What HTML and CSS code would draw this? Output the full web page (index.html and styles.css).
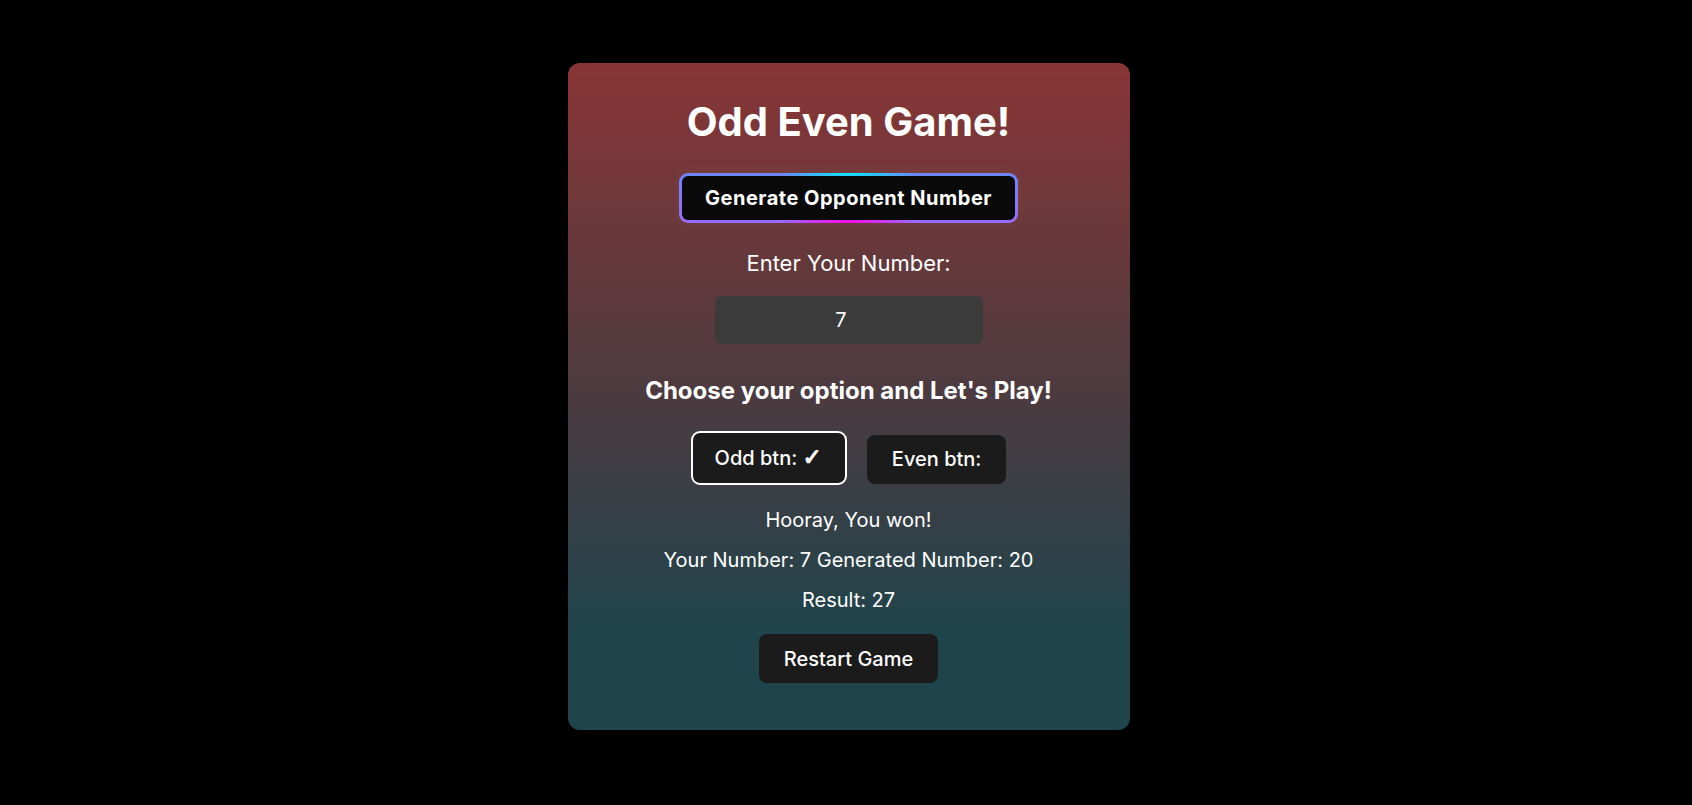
FILE: index.html
```html
<!DOCTYPE html>
<html lang="en">
<head>
<meta charset="utf-8">
<title>Odd Even Game</title>
<link rel="stylesheet" href="styles.css">
</head>
<body>
<main class="page">
  <section class="card">
    <h1 class="title">Odd Even Game!</h1>
    <button class="gen-btn" type="button">Generate Opponent Number</button>
    <label class="label" for="num">Enter Your Number:</label>
    <input id="num" class="num-input" type="number" value="7">
    <h2 class="subtitle">Choose your option and Let's Play!</h2>
    <div class="options">
      <button class="opt-btn opt-btn--active" type="button">Odd btn: <span class="check">✓</span></button>
      <button class="opt-btn" type="button">Even btn:</button>
    </div>
    <p class="msg msg--first">Hooray, You won!</p>
    <p class="msg">Your Number: 7 Generated Number: 20</p>
    <p class="msg">Result: 27</p>
    <button class="restart-btn" type="button">Restart Game</button>
  </section>
</main>
</body>
</html>
```
FILE: styles.css
```css
* {
  box-sizing: border-box;
}

html, body {
  margin: 0;
  padding: 0;
  background: #000;
}

body {
  font-family: Inter, "Noto Sans", "Liberation Sans", sans-serif;
  color: #fff;
}

.page {
  display: flex;
  justify-content: center;
  padding-top: 63px;
  padding-left: 5px;
}

.card {
  width: 562px;
  height: 667px;
  border-radius: 12px;
  background: linear-gradient(180deg, #893535 0%, #4b3b40 50%, #1f444c 86%, #1f444c 100%);
  display: flex;
  flex-direction: column;
  align-items: center;
  padding-top: 35px;
}

.title {
  margin: 0;
  font-size: 40px;
  line-height: 48px;
  font-weight: 700;
}

.gen-btn {
  margin-top: 27px;
  height: 50px;
  padding: 0 23px;
  border: 3px solid transparent;
  border-radius: 9px;
  background:
    linear-gradient(#0a0a0a, #0a0a0a) padding-box,
    radial-gradient(ellipse 70px 9px at 50% 0%, #00f0ff, rgba(0, 240, 255, 0)) border-box,
    radial-gradient(ellipse 70px 9px at 50% 100%, #ff00e6, rgba(255, 0, 230, 0)) border-box,
    linear-gradient(180deg, #6b86ff, #9a6cf6) border-box;
  color: #fff;
  font-family: inherit;
  font-size: 20px;
  font-weight: 700;
  letter-spacing: 0.5px;
  box-shadow: 0 0 14px rgba(255, 255, 255, 0.06);
}

.label {
  margin-top: 27px;
  font-size: 22px;
  line-height: 26px;
}

.num-input {
  margin-top: 20px;
  width: 268px;
  height: 48px;
  border: none;
  border-radius: 6px;
  background: #3b3b3b;
  color: #fff;
  font-family: inherit;
  font-size: 20px;
  text-align: center;
  outline: none;
}

.subtitle {
  margin: 33px 0 0;
  font-size: 24px;
  line-height: 28px;
  font-weight: 700;
}

.options {
  margin-top: 26px;
  display: flex;
  gap: 20px;
  align-items: center;
}

.opt-btn {
  height: 49px;
  padding: 0 25px;
  border: none;
  border-radius: 8px;
  background: #1b1b1b;
  color: #fff;
  font-family: inherit;
  font-size: 20px;
  font-weight: 500;
  position: relative;
  top: 1px;
}

.opt-btn--active {
  height: 54px;
  padding: 0 23px 0 22px;
  border: 2px solid #fff;
  border-radius: 9px;
  top: 0;
}

.check {
  font-family: "DejaVu Sans", sans-serif;
  font-size: 23px;
  line-height: 1;
  font-weight: 700;
  -webkit-text-stroke: 1px #fff;
}

.msg {
  margin: 16px 0 0;
  font-size: 20px;
  line-height: 24px;
}

.msg--first {
  margin-top: 23px;
}

.restart-btn {
  margin-top: 22px;
  height: 49px;
  padding: 0 25px;
  border: none;
  border-radius: 8px;
  background: #1b1b1b;
  color: #fff;
  font-family: inherit;
  font-size: 20px;
  font-weight: 500;
}
```
